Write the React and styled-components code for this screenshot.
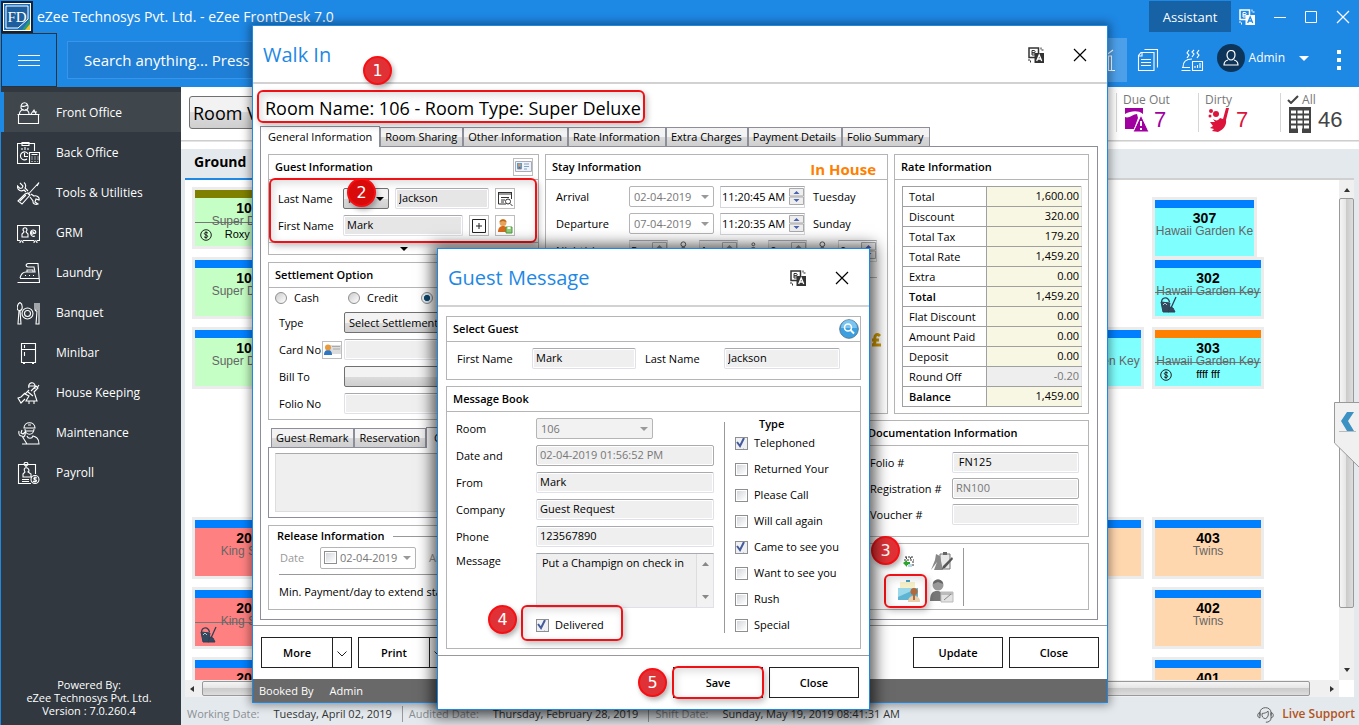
import styled, {createGlobalStyle, css} from "styled-components"

const arrow = color =>
  `url("data:image/svg+xml,%3Csvg xmlns='http://www.w3.org/2000/svg' width='8' height='4'%3E%3Cpath d='M0 0h8L4 4z' fill='%23${color}'/%3E%3C/svg%3E")`

const GlobalStyle = createGlobalStyle`
  * {
    box-sizing: border-box;
  }
  body {
    margin: 0;
    overflow: hidden;
    font: 11px/16px "Open Sans", "Noto Sans", sans-serif;
    color: #000;
  }
  button, input, select, textarea {
    margin: 0;
    font: inherit;
    color: inherit;
  }
`

/* shell */

const Shell = styled.div`
  position: relative;
  display: flex;
  flex-direction: column;
  height: 100vh;
  border-left: 1px solid #1e88e5;
  background: #fff;
`

const TitleBar = styled.header`
  display: flex;
  align-items: center;
  height: 33px;
  color: #fff;
  background: #1e88e5;
`

const AppTitle = styled.h1`
  flex: 1;
  margin: 0;
  padding-left: 4px;
  font-size: 14px;
  font-weight: 400;
`

const Assistant = styled.button`
  width: 82px;
  height: 31px;
  border: 0;
  font-size: 13px;
  background: #1762a5;
`

const WindowControls = styled.div`
  display: flex;
  justify-content: space-between;
  align-items: center;
  width: 128px;
  padding: 0 9px 0 8px;
`

const PlainButton = styled.button`
  display: flex;
  padding: 0;
  border: 0;
  background: none;
`

const Toolbar = styled.div`
  display: flex;
  align-items: center;
  height: 54px;
  color: #fff;
  background: #1e88e5;
`

const MenuButton = styled.button`
  display: flex;
  flex-direction: column;
  justify-content: center;
  align-items: center;
  gap: 4px;
  align-self: stretch;
  width: 56px;
  border: 1px solid #29333d;
  background: none;

  span {
    width: 22px;
    height: 1px;
    background: #fff;
  }
`

const Search = styled.input`
  width: 460px;
  height: 38px;
  margin: 0 auto 0 10px;
  padding: 0 16px;
  border: 1px solid #3a94e8;
  font-size: 15px;
  background: #1f7ed5;

  &::placeholder {
    color: #fff;
    opacity: 1;
  }
`

const ToolButton = styled(PlainButton)`
  justify-content: center;
  align-items: center;
  width: 44px;
  height: 44px;
  background: ${props => props.$active ? "#4ca0ea" : "none"};
`

const UserMenu = styled(PlainButton)`
  align-items: center;
  gap: 4px;
  padding: 0 0 4px 2px;
  font-size: 12px;
`

const Avatar = styled.span`
  display: flex;
  justify-content: center;
  align-items: center;
  width: 28px;
  height: 28px;
  border-radius: 50%;
  background: #0d3459;
`

const Caret = styled.span`
  margin-left: 10px;
  border: 5px solid transparent;
  border-top-color: #fff;
  border-bottom: 0;
`

const Dots = styled(PlainButton)`
  flex-direction: column;
  gap: 4px;
  padding: 0 18px 0 28px;

  span {
    width: 4px;
    height: 4px;
    background: #fff;
  }
`

const Body = styled.div`
  display: flex;
  flex: 1;
  min-height: 0;
`

const Sidebar = styled.nav`
  display: flex;
  flex-direction: column;
  width: 180px;
  padding-top: 5px;
  color: #fff;
  background: #31383f;
`

const NavItem = styled.a`
  display: flex;
  align-items: center;
  gap: 16px;
  height: 40px;
  padding: 2px 0 0 13px;
  border-left: 3px solid ${props => props.$active ? "#1e88e5" : "transparent"};
  font-size: 12px;
  color: #fff;
  text-decoration: none;
  background: ${props => props.$active ? "#3f464c" : "none"};
`

const PoweredBy = styled.p`
  margin: auto 4px 8px 0;
  font-size: 11px;
  line-height: 13px;
  text-align: center;
`

const Main = styled.main`
  display: flex;
  flex: 1;
  flex-direction: column;
  min-width: 0;
  background: #e4e9ed;
`

const StatusRow = styled.div`
  display: flex;
  justify-content: space-between;
  height: 62px;
  padding: 6px 0 0 8px;
  border-bottom: 7px solid #fff;
  background: linear-gradient(#fff 53px, #c4c4c4 53px, #eee 55px);
`

const RoomView = styled.button`
  width: 140px;
  height: 33px;
  margin-top: 3px;
  padding: 0 3px;
  border: 1px solid #707070;
  border-radius: 3px;
  font-size: 18px;
  text-align: left;
  background: linear-gradient(#f2f2f2 50%, #dcdcdc 50%, #cfcfcf);
`

const Counters = styled.div`
  display: flex;
  height: 39px;
`

const Counter = styled.div`
  width: 82px;
  padding-left: 6px;
  border-left: 1px solid #d6d6d6;
  font-size: 12px;
  line-height: 14px;
  color: #777;

  &:last-child {
    width: 79px;
  }

  div {
    display: flex;
    align-items: center;
    gap: 5px;
    font: 22px/24px "Liberation Sans", Arial, sans-serif;
    color: ${props => props.color};
  }
`

const FloorName = styled.h2`
  height: 31px;
  margin: 0 5px 0 4px;
  padding: 3px 9px;
  border-bottom: 2px solid #d0d0d0;
  border-image: linear-gradient(90deg, #1e88e5 50%, #d0d0d0 50%) 1;
  font-size: 14px;
  line-height: 20px;
`

const BoardArea = styled.div`
  display: grid;
  grid-template-columns: 1fr 15px;
  grid-template-rows: 1fr 17px;
  flex: 1;
  min-height: 0;
  margin: 0 5px 0 4px;
  background: #fff;
`

/* the fourth row is the gap between two floors */
const Board = styled.div`
  display: grid;
  grid-template-columns: repeat(9, 106px);
  grid-template-rows: repeat(3, 56px) 106px repeat(3, 56px);
  gap: 14px;
  padding: 10px;
  overflow: hidden;
`

const RoomTile = styled.section`
  grid-column: ${props => props.$col};
  grid-row: ${props => props.$row};
  align-self: start;
  height: 56px;
  border-top: 8px solid ${props => props.$bar || "#0080ff"};
  box-shadow: 0 0 0 3px #ececec;
  font: 12px/13px "Liberation Sans", Arial, sans-serif;
  text-align: center;
  color: #666;
  white-space: nowrap;
  background: ${props => props.$fill};

  ${props => props.$small && css`
    width: 99px;
    margin-top: 10px;
  `}

  strong {
    display: block;
    padding-top: 4px;
    font-size: 14px;
    color: #000;
  }
`

const TileNote = styled.div`
  display: grid;
  grid-template-columns: 18px 1fr 18px;
  align-items: center;
  height: 24px;
  margin-top: -6px;
  padding: 0 5px;
  border-top: 1px solid #777;
  font-size: 11px;
  color: #000;
`

const ScrollTrack = styled.div`
  display: flex;
  flex-direction: ${props => props.$vertical ? "column" : "row"};
  justify-content: space-between;
  align-items: center;
  padding: ${props => props.$vertical ? "8px 0" : "0 5px"};
  background: #f0f0f0;
`

const ScrollThumb = styled.div`
  flex: 1;
  align-self: stretch;
  margin: ${props => props.$vertical ? "6px 0 60px" : "1px 20px 1px 8px"};
  border: 1px solid #999;
  border-radius: 2px;
  background: linear-gradient(${props => props.$vertical ? "90deg" : "180deg"}, #f5f5f5, #e4e4e4 50%, #cbcbcb 50%, #ddd);
`

const Tip = styled.span`
  border: 3px solid transparent;
  ${props => css`
    border-${props.$to}: 0;
    border-${props.$from}: 4px solid #333;
  `}
`

const StatusBar = styled.footer`
  display: flex;
  align-items: center;
  height: 28px;
  padding: 6px 4px 0 6px;
  font-size: 11px;
  white-space: nowrap;
  color: #333;
`

const StatusCell = styled.span`
  display: flex;
  gap: 14px;
  padding-right: 10px;
  margin-right: 6px;
  border-right: 1px solid ${props => props.$last ? "transparent" : "#999"};

  span {
    color: #8b8f94;
  }
`

const Support = styled.a`
  display: flex;
  align-items: center;
  gap: 8px;
  margin-left: auto;
  font-size: 12px;
  font-weight: 600;
  color: #b3541a;
  text-decoration: none;

  svg {
    color: #444;
  }
`

const SideFlap = styled.svg`
  position: absolute;
  right: 0;
  top: 402px;
`

/* windows */

const Window = styled.section`
  position: absolute;
  left: ${props => props.$left}px;
  top: ${props => props.$top}px;
  width: ${props => props.$width}px;
  border: 1px solid #1e88e5;
  background: #fff;
  box-shadow: ${props => props.$front ? "0 2px 14px 5px rgba(0, 0, 0, .65)" : "0 0 9px 2px rgba(0, 0, 0, .4)"};
`

const WindowHead = styled.header`
  display: flex;
  align-items: center;
  gap: 29px;
  height: 58px;
  padding: 2px 20px 0 10px;
  border-bottom: 2px solid #d2d2d2;

  h2 {
    flex: 1;
    margin: 0;
    font-size: 20px;
    font-weight: 400;
    line-height: 28px;
    color: #1e88e5;
  }
`

const WindowFoot = styled.footer`
  display: flex;
  gap: 6px;
  height: 54px;
  padding: 11px ${props => props.$pad}px 0;
  border-top: 1px solid #999;
`

const ActionButton = styled.button`
  width: 90px;
  height: 31px;
  border: 1px solid #222;
  font-weight: 600;
  background: #fff;
`

const SplitButton = styled.div`
  display: flex;

  ${ActionButton} {
    width: 72px;
  }

  ${ActionButton} + ${ActionButton} {
    width: 20px;
    margin-left: -1px;
    padding: 0 4px;
  }
`

const Spacer = styled.span`
  flex: 1;
`

const BookedBy = styled.div`
  display: flex;
  gap: 16px;
  height: 23px;
  padding: 4px 6px;
  color: #fff;
  background: #696969;
`

const RoomHeading = styled.h3`
  height: 42px;
  margin: 0;
  padding: 10px 12px;
  font-size: 18px;
  font-weight: 400;
  line-height: 28px;
`

const Tabs = styled.div`
  display: flex;
  align-items: flex-end;
  height: 20px;
  padding: 0 ${props => props.$pad || 7}px;
`

const Tab = styled.button`
  height: 19px;
  padding: 0 5px 0 4px;
  border: 1px solid #8c8e9a;
  border-bottom: 0;
  white-space: nowrap;
  background: linear-gradient(#f3f3f3 50%, #dadada 50%, #cfcfcf);

  ${props => props.$active && css`
    position: relative;
    height: 21px;
    margin-bottom: -1px;
    padding: 0 7px;
    background: #fff;
  `}
`

const TabPanel = styled.div`
  display: grid;
  grid-template-columns: 271px 1fr;
  gap: 6px;
  margin: 0 9px 5px 7px;
  padding: 7px 8px 9px 7px;
  border: 1px solid #8c8e9a;
`

const Column = styled.div`
  display: flex;
  flex-direction: column;
  gap: ${props => props.$gap}px;
  min-width: 0;
`

const TopPanels = styled.div`
  display: grid;
  grid-template-columns: 1fr 195px;
  gap: 6px;
  height: 260px;
`

const Group = styled.section`
  border: 1px solid #b5b5b5;
  min-width: 0;
  ${props => props.$side && css`
    align-self: flex-end;
    width: 228px;
  `}
`

const GroupHead = styled.h4`
  display: flex;
  justify-content: space-between;
  align-items: center;
  height: 25px;
  margin: 0;
  padding: 0 ${props => props.$tight ? 1 : 5}px 0 6px;
  border-bottom: 1px solid #b5b5b5;
  font-size: 11px;
  font-weight: 600;
`

const InHouse = styled.span`
  padding: 3px 6px 0 0;
  font-size: 15px;
  font-weight: 700;
  color: #ff8000;
`

const Fields = styled.div`
  display: flex;
  flex-direction: column;
  gap: ${props => props.$gap || 6}px;
  padding: ${props => props.$pad};
`

const Row = styled.div`
  display: flex;
  align-items: center;
  gap: ${props => props.$gap || 0}px;
  height: 21px;
`

const RadioRow = styled.div`
  display: flex;
  align-items: center;
  height: 18px;
  padding: 2px 0 0 6px;
  overflow: hidden;
`

const Label = styled.label`
  flex: none;
  width: ${props => props.$width}px;
  white-space: nowrap;
  color: ${props => props.$muted ? "#999" : "#000"};
`

const DayName = styled.span`
  padding-left: 8px;
`

const field = css`
  flex: none;
  width: ${props => props.$width}px;
  height: 21px;
  padding: 0 3px 2px;
  border: 1px solid #e0e1e8;
  border-top-color: #a8aab0;
  border-radius: 2px;
  outline: 0;
`

const Input = styled.input`
  ${field}
  box-shadow: inset 0 0 0 1px #fff;
  color: ${props => props.$muted ? "#777" : "#000"};
  background: ${props => props.$fill || "#efefef"};
  ${props => props.$muted && css`border-color: #ababab;`}
`

const Select = styled.select`
  ${field}
  padding: 0 4px;
  appearance: none;
  border-color: ${props => props.$muted ? "#b5b5b5" : "#707070"};
  color: ${props => props.$muted ? "#777" : "#000"};
  background: ${props => arrow(props.$muted ? "999999" : "000000")} right 4px center no-repeat,
    ${props => props.$flat || "linear-gradient(#f3f3f3 50%, #dcdcdc 50%, #cfcfcf)"};
`

const TimeBox = styled.span`
  display: flex;
  flex: none;
  align-items: center;
  width: ${props => props.$width}px;
  height: 22px;
  margin-left: ${props => props.$after || 0}px;
  border: 1px solid #d5d7dd;
  border-top-color: #a8aab0;
  background: ${props => props.$muted ? "#eee" : "#fff"};

  input {
    flex: 1;
    min-width: 0;
    padding: 0 0 0 1px;
    border: 0;
    background: none;
  }
`

const StayRule = styled.hr`
  width: 100%;
  height: 1px;
  margin: 10px 0 0;
  border: 0;
  background: #b5b5b5;
`

const StayTotal = styled.div`
  display: flex;
  justify-content: flex-end;
  align-items: center;
  height: 124px;
  padding-right: 5px;
`

const IconButton = styled.button`
  display: flex;
  justify-content: center;
  align-items: center;
  flex: none;
  width: 20px;
  height: ${props => props.$low ? 18 : 21}px;
  padding: 0;
  border: 1px solid #bdbdbd;
  background: #fff;
`

const More = styled.button`
  display: flex;
  justify-content: center;
  align-items: center;
  width: 100%;
  height: 12px;
  margin-top: 6px;
  padding: 0;
  border: 0;
  border-top: 1px solid #b5b5b5;
  background: none;
`

const Choice = styled.label`
  display: flex;
  flex: none;
  align-items: center;
  gap: ${props => props.$gap || 6}px;
  width: ${props => props.$width || 110}px;
  height: 14px;
  white-space: nowrap;
`

const Radio = styled.input`
  appearance: none;
  flex: none;
  width: 12px;
  height: 12px;
  border: 1px solid #8e8f8f;
  border-radius: 50%;
  background: linear-gradient(135deg, #ccc, #fff);

  &:checked {
    background: radial-gradient(#0d4a73 40%, #e6f2fa 46%);
  }
`

const Check = styled.input`
  appearance: none;
  flex: none;
  width: 13px;
  height: 13px;
  padding: 1px;
  border: 1px solid #8e8f8f;
  background: linear-gradient(135deg, #d4d7dc, #fff) content-box;

  &:checked {
    background: url("data:image/svg+xml,%3Csvg xmlns='http://www.w3.org/2000/svg' width='11' height='11'%3E%3Cpath d='M2 5l3 4 4-8' fill='none' stroke='%23435a9b' stroke-width='2'/%3E%3C/svg%3E") border-box, #eef0f4;
  }
`

const RemarkPanel = styled.div`
  height: 71px;
  padding: 5px 6px;
  border: 1px solid #8c8e9a;

  textarea {
    width: 100%;
    height: 59px;
    border: 1px solid #ddd;
    border-top-color: #aaa;
    resize: none;
    background: #efefef;
  }
`

const Release = styled(Group)`
  height: 85px;
  padding: 2px 8px;

  h4 {
    display: flex;
    align-items: center;
    gap: 9px;
    margin: 0 0 3px;
    font-size: 11px;
    font-weight: 600;
  }

  h4::after {
    content: "";
    flex: 1;
    border-top: 1px solid #999;
  }

  p {
    margin: 6px 2px;
    padding-top: 9px;
    border-top: 1px solid #999;
    white-space: nowrap;
    overflow: hidden;
  }
`

const DateBox = styled.span`
  display: flex;
  flex: none;
  align-items: center;
  gap: 3px;
  width: 96px;
  height: 22px;
  padding: 0 4px 0 3px;
  border: 1px solid #b5b5b5;
  border-radius: 2px;
  white-space: nowrap;
  color: #777;
  background: ${arrow("999999")} right 4px center no-repeat;
`

const RateTable = styled.table`
  margin: 6px 0 0 7px;
  border-collapse: collapse;

  th, td {
    height: 20px;
    padding: 0 6px;
    border: 1px solid #a0a0a0;
    line-height: 16px;
    white-space: nowrap;
  }

  th {
    width: 84px;
    font-weight: 400;
    text-align: left;
  }

  td {
    width: 95px;
    padding: 0 2px 2px;
    border-right-color: #e2e3ea;
    text-align: right;
    background: #f8f7e4;
  }
`

const RateRow = styled.tr`
  th {
    font-weight: ${props => props.$strong ? 600 : 400};
  }
  ${props => props.$muted && css`
    td {
      color: #777;
      background: #eee;
    }
  `}
`

const IconPanel = styled(Group)`
  display: flex;
  justify-content: flex-start;
  height: 67px;
  padding: 4px 0 3px 34px;
`

const IconGrid = styled.div`
  display: grid;
  grid-template-columns: 26px 26px;
  grid-template-rows: 28px 28px;
  gap: 1px 7px;
  place-items: center;
  padding-right: 8px;
  border-right: 1px solid #999;
`

const MessageArea = styled.div`
  padding: 9px 8px 6px;

  ${Group} + ${Group} {
    margin-top: 6px;
  }
`

const MessageBook = styled.div`
  display: flex;
  height: 236px;
  padding: 6px 0 0 9px;
`

const MessageRow = styled.div`
  display: flex;
  align-items: flex-start;
`

const Delivered = styled(Choice)`
  margin: 4px 0 0 80px;
`

const TypeColumn = styled.fieldset`
  display: flex;
  flex-direction: column;
  gap: 12px;
  height: 211px;
  margin: 4px 0 0 10px;
  padding: 14px 0 0 10px;
  border: 0;
  border-left: 1px solid #999;
  min-width: 0;
`

const TypeTitle = styled.b`
  margin: -20px 0 -8px 24px;
  font-weight: 600;
`

const TextAreaBox = styled.div`
  display: flex;
  width: 178px;
  height: 55px;
  border: 1px solid #e0e1e8;
  border-top-color: #a8aab0;
  background: #efefef;

  textarea {
    flex: 1;
    min-width: 0;
    padding: 1px 0 0 5px;
    border: 0;
    white-space: nowrap;
    overflow: hidden;
    resize: none;
    background: none;
  }

  > span {
    display: flex;
    flex-direction: column;
    justify-content: space-between;
    align-items: center;
    width: 17px;
    padding: 8px 0;
    border-left: 1px solid #ddd;
    background: #f2f2f2;
  }
`

/* numbered steps drawn over the windows */

const Marker = styled.span`
  position: absolute;
  left: ${props => props.$x}px;
  top: ${props => props.$y}px;
  width: 29px;
  height: 29px;
  border: 2px solid #f80f14;
  border-radius: 50%;
  font: 16px/25px "DejaVu Sans", sans-serif;
  text-align: center;
  color: #fff;
  background: ${props => props.$solid ? "#d90a0a" : "#e03236"};
  box-shadow: 2px 3px 5px rgba(0, 0, 0, .3);
`

const Outline = styled.span`
  position: absolute;
  left: ${props => props.$x}px;
  top: ${props => props.$y}px;
  width: ${props => props.$w}px;
  height: ${props => props.$h}px;
  border: 2px solid #f01116;
  border-radius: 6px;
  box-shadow: 2px 3px 6px rgba(0, 0, 0, .25), inset 2px 3px 8px rgba(0, 0, 0, .14);
  pointer-events: none;
`

const LineIcon = ({children, size = 23}) => (
  <svg width={size} height={size} viewBox="0 0 23 23" fill="none" stroke="currentColor" strokeWidth="1.1">
    {children}
  </svg>
)

const Translate = ({color = "#333", paper = "#fff"}) => (
  <svg width="16" height="16" viewBox="0 0 16 16">
    <path d="M1 1h9.500v9.500H1z" fill={paper} stroke={color} strokeWidth="1.5"/>
    <path d="M4 3.500v4.500h2c2 0 2-2.200.5-2.200H4h2.200c1.300 0 1.300-2.300 0-2.300z" fill="none" stroke={color}/>
    <path d="M6.500 6H16v10H6.500z" fill={color}/>
    <path d="M8.700 14l2.500-6 2.500 6M9.700 12h3" fill="none" stroke={paper} strokeWidth="1.300"/>
    <path d="M13 .5v2.500h3M0 13h2.500v3" fill="none" stroke={color} strokeDasharray="2 1"/>
  </svg>
)

const Cross = ({color = "#000"}) => (
  <svg width="14" height="14" viewBox="0 0 14 14" stroke={color} strokeWidth="1.2">
    <path d="M1 1l12 12M13 1L1 13"/>
  </svg>
)

const Spin = ({muted}) => (
  <svg width="15" height="17" viewBox="0 0 15 17">
    <path d="M.5.5h14v7.500H.5zM.5 9h14v7.500H.5z" fill="#eee" stroke="#aaa"/>
    <path d="M4.500 6L7.500 3l3 3zM4.500 11l3 3 3-3z" fill={muted ? "#888" : "#4a62b0"}/>
  </svg>
)

const Occupant = ({child}) => (
  <svg width="32" height="21" viewBox="0 0 32 21" fill="none" stroke="#555">
    <circle cx="16" cy="4" r={child ? 1.5 : 2.500}/>
    <path d="M12 14c0-9 8-9 8 0zM14 14v6M18 14v6"/>
  </svg>
)

const Person = () => (
  <svg width="16" height="16" viewBox="0 0 16 16">
    <path d="M1 14c0-4 2-6 5-6s5 2 5 6z" fill="#d8691b"/>
    <circle cx="6" cy="4.500" r="3.500" fill="#e8a35a"/>
    <path d="M2.500 4C3 .5 9 .5 9.500 4L6 3z" fill="#b5651d"/>
    <path d="M9 9h6v6H9z" fill="#8fce7a" stroke="#4f9b3c"/>
    <path d="M10.500 9h3v2h-3z" fill="#fff"/>
  </svg>
)

const CardIcon = () => (
  <svg width="17" height="12" viewBox="0 0 17 12">
    <path d="M.5.5h16v10H.5z" fill="#eef3f8" stroke="#aab"/>
    <path d="M2 2h5v6H2z" fill="#5b9bd5"/>
    <circle cx="4.500" cy="4" r="1.500" fill="#d39a63"/>
    <path d="M2.500 8c0-3 4-3 4 0zM9 3h5M9 5.500h5M9 8h3" fill="#8a4b20" stroke="#7fa3c7"/>
  </svg>
)

const CardPerson = () => (
  <svg width="17" height="12" viewBox="0 0 17 12">
    <path d="M5 1h12v9H5z" fill="#ddd"/>
    <path d="M8 2.500h8M9 5h7" stroke="#aaa"/>
    <path d="M0 11c0-4 2-5 4-5s4 1 4 5z" fill="#2c76c4"/>
    <circle cx="4" cy="3.500" r="3" fill="#e79b3c"/>
  </svg>
)

const Bucket = () => (
  <svg width="17" height="17" viewBox="0 0 17 17" stroke="#2f3f55">
    <path d="M1 6l9 1-1.500 9H3z" fill="#34495e"/>
    <path d="M1.500 6C2 1 8 0 9.500 6M16 1l-5 11" fill="none" strokeWidth="1.300"/>
    <path d="M10 11l3 1 2 4H8z" fill="#34495e"/>
    <path d="M3 9l2-2 2 2" stroke="#a9c7d0" fill="none"/>
  </svg>
)

const Coin = () => (
  <svg width="12" height="12" viewBox="0 0 12 12" fill="none" stroke="#222">
    <circle cx="6" cy="6" r="5.300"/>
    <path d="M8 4.200C7 3 4.200 3.200 4.300 4.700 4.400 6.300 7.700 5.500 7.700 7.300 7.700 8.900 5 9 4 7.700M6 2.200v7.600"/>
  </svg>
)

const navItems = [
  ["Front Office", <path d="M.5 12.500h22M1.500 12.500v9h20v-9M2.500 12c0-3 2-4 4-4.500M12 12c0-3-2-4-4-4.500M4 6c-1-7 8-7 7 0-1 3-6 3-7 0zM4 4c2 1 5 0 6-1M14 12l3-4 2 4M16 10h4"/>],
  ["Back Office", <path d="M12 21.500H.5v-20h17V9M5 3.500V.5h7v3zM5 8V6M8 8V5M11 8V6M11 12a4 4 0 1 0-1 5M7.500 11v3.500H11M12.500 10.500h10v11h-10zM14.500 12.500h6M14.500 15h1m2 0h1m2 0h1M14.500 17h1m2 0h1m2 0h1M14.500 19.500h1m2 0h1m2 0h1"/>],
  ["Tools & Utilities", <path d="M22 .5l-11 12M20 4l2-3.500M11 11l2 2-8 9-4-3 7-7zM3 19l6-6M3 1l3 3-1 2-2 .5L.500 4C0 8 4 10 7 8l2 2M7 .5C9 2 9 5 8 6l3 3M13 15l3 4c-.5 3 3 4 5 3l-3-2 1-3 3 1c1-3-3-5-5-4l-3-2"/>],
  ["GRM", <path d="M3 18.500H.5v-15h22v15H20M6 18.500h11M3 21c0-3 3-3 3 0M17 21c0-3 3-3 3 0M5 15v-3l2-2-1-2c0-3 4-3 4 0l-1 2 2 2v3zM18 14c-5 2-6-6-2-6 4 0 3 5 1 3-1-2-3-1-3 0 1 2 3 1 3-1"/>],
  ["Laundry", <path d="M.5 20.500h22L21 1.500H11C8 2 9 5 11 5h6l1 5H9c-3 0-5 2-6 6M3 16.500h19M10 10V8h6v2M8 13.500h1m3 0h1m3 0h1"/>],
  ["Banquet", <path d="M3 .5C0 2-1 8 2 8.500L1 22h3L3 8.500C6 8 6 2 3 .5zM18 1v6c0 1 1 2 2 2l-1 13h3V1M20 1v7M16 11.500a5.500 5.500 0 1 0-11 0 5.500 5.500 0 0 0 11 0zM13.500 11.500a3 3 0 1 0-6 0 3 3 0 0 0 6 0z"/>],
  ["Minibar", <path d="M4.500 1.500h14v19h-14zM4.500 7.500h14M7.500 3v3M7.500 10v4M6 21.500h2M15 21.500h2"/>],
  ["House Keeping", <path d="M12 6c-2-6 6-7 6-2v3M12 4h6M12 8l-4 4 4 2-3 5h11l-3-9 4-4-2-2-5 5M8 11L4 15 1 16l3 5 4-4M20 6l2-3M12 19v3M17 19v3M11 10l5 4"/>],
  ["Maintenance", <path d="M7 6c0-7 11-7 11 0zM8 7c0 7 9 7 9 0M8 9h9M5 22h17c0-6-3-7-6-8-1 3-5 3-6 0M2 9c-1 4 1 5 3 5l5 8M5 8l-1 3 2 1 2-2c1 3-1 5-2 5M11 3h3"/>],
  ["Payroll", <path d="M14 21.500H1.500v-19h17V12M7 2.500c0-3 4-3 4 0l-2 2zM6 15v-3l2-2c-3-5 4-6 4-1l-1 1 3 2v3zM5 17.500h7M5 19.500h7M22 17.500a4 4 0 1 0-8 0 4 4 0 0 0 8 0zM20 16c-4-2-4 2-1 2 2 2-2 2-3 1M18 14.500v6"/>],
]

const tiles = [
  {no: "101", name: "Super Deluxe", col: 1, row: 1, fill: "#c5ffc5", bar: "#808000", guest: "Roxy Gar"},
  {no: "102", name: "Super Deluxe", col: 1, row: 2, fill: "#c5ffc5"},
  {no: "103", name: "Super Deluxe", col: 1, row: 3, fill: "#c5ffc5"},
  {no: "307", name: "Hawaii Garden Ke", col: 9, row: 1, fill: "#80ffff", small: true},
  {no: "302", name: "Hawaii Garden Key", col: 9, row: 2, fill: "#80ffff", dirty: true},
  {no: "306", name: "Hawaii Garden Key", col: 8, row: 3, fill: "#80ffff"},
  {no: "303", name: "Hawaii Garden Key", col: 9, row: 3, fill: "#80ffff", bar: "#ff8000", guest: "ffff fff"},
  {no: "201", name: "King Suite", col: 1, row: 5, fill: "#ff8080"},
  {no: "202", name: "King Suite", col: 1, row: 6, fill: "#ff8080", dirty: true},
  {no: "203", name: "", col: 1, row: 7, fill: "#ff8080"},
  {no: "404", name: "Twins", col: 8, row: 5, fill: "#ffd7ae"},
  {no: "403", name: "Twins", col: 9, row: 5, fill: "#ffd7ae"},
  {no: "402", name: "Twins", col: 9, row: 6, fill: "#ffd7ae"},
  {no: "401", name: "", col: 9, row: 7, fill: "#ffd7ae"},
]

const rates = [
  ["Total", "1,600.00"],
  ["Discount", "320.00"],
  ["Total Tax", "179.20"],
  ["Total Rate", "1,459.20"],
  ["Extra", "0.00"],
  ["Total", "1,459.20", "strong"],
  ["Flat Discount", "0.00"],
  ["Amount Paid", "0.00"],
  ["Deposit", "0.00"],
  ["Round Off", "-0.20", "muted"],
  ["Balance", "1,459.00", "strong"],
]

const messageTypes = [
  ["Telephoned", true],
  ["Returned Your"],
  ["Please Call"],
  ["Will call again"],
  ["Came to see you", true],
  ["Want to see you"],
  ["Rush"],
  ["Special"],
]

const Head = ({title}) => (
  <WindowHead>
    <h2>{title}</h2>
    <PlainButton aria-label="Language"><Translate/></PlainButton>
    <PlainButton aria-label="Close window"><Cross/></PlainButton>
  </WindowHead>
)

const Split = ({children}) => (
  <SplitButton>
    <ActionButton>{children}</ActionButton>
    <ActionButton aria-label={`${children} options`}>
      <svg width="10" height="6" viewBox="0 0 10 6" fill="none" stroke="#222"><path d="M.5.5L5 5 9.500.5"/></svg>
    </ActionButton>
  </SplitButton>
)

const StayRow = ({label, date, time, day}) => (
  <Row>
    <Label $width={73} htmlFor={label}>{label}</Label>
    <Select id={label} $width={85} $muted $flat="#fff"><option>{date}</option></Select>
    <TimeBox $width={85} $after={6}><input aria-label={`${label} time`} defaultValue={time}/><Spin/></TimeBox>
    <DayName>{day}</DayName>
  </Row>
)

const WalkIn = () => (
  <Window $left={251} $top={25} $width={856}>
    <Head title="Walk In"/>
    <RoomHeading>Room Name: 106 - Room Type: Super Deluxe</RoomHeading>
    <Tabs>
      <Tab $active>General Information</Tab>
      <Tab>Room Sharing</Tab>
      <Tab>Other Information</Tab>
      <Tab>Rate Information</Tab>
      <Tab>Extra Charges</Tab>
      <Tab>Payment Details</Tab>
      <Tab>Folio Summary</Tab>
    </Tabs>
    <TabPanel>
      <Column $gap={7}>
        <Group>
          <GroupHead>
            Guest Information
            <IconButton $low aria-label="Guest card"><CardIcon/></IconButton>
          </GroupHead>
          <Fields $pad="8px 0 0 9px">
            <Row $gap={6}>
              <Label $width={59} htmlFor="last">Last Name</Label>
              <Select aria-label="Salutation" $width={46}><option>Mr.</option></Select>
              <Input id="last" $width={94} $fill="#e6e6e6" defaultValue="Jackson"/>
              <IconButton aria-label="Find guest">
                <svg width="16" height="16" viewBox="0 0 16 16" fill="none" stroke="#333">
                  <path d="M1 3h14M1 1.500h14M1.500 1v12H9M14.500 1v7M4 6.500h8M4 9h4M4 11h3"/>
                  <circle cx="11" cy="10.500" r="2.500"/><path d="M13 12.500l2.500 2.500"/>
                </svg>
              </IconButton>
            </Row>
            <Row $gap={6}>
              <Label $width={59} htmlFor="first">First Name</Label>
              <Input id="first" $width={120} $fill="#e6e6e6" defaultValue="Mark"/>
              <IconButton aria-label="Add guest">
                <svg width="14" height="14" viewBox="0 0 14 14" fill="none" stroke="#222">
                  <path d="M.5.5h13v13H.5zM7 4v6M4 7h6"/>
                </svg>
              </IconButton>
              <IconButton aria-label="Guest profile"><Person/></IconButton>
            </Row>
          </Fields>
          <More aria-label="More fields"><svg width="8" height="4"><path d="M0 0h8L4 4z"/></svg></More>
        </Group>

        <Group>
          <GroupHead>Settlement Option</GroupHead>
          <RadioRow>
            <Choice $width={73} $gap={7}><Radio type="radio" name="pay"/>Cash</Choice>
            <Choice $width={73} $gap={7}><Radio type="radio" name="pay"/>Credit</Choice>
            <Choice $width={73} $gap={7}><Radio type="radio" name="pay" aria-label="City Ledger" defaultChecked/></Choice>
          </RadioRow>
          <Fields $pad="6px 0 5px 10px">
            <Row>
              <Label $width={65} htmlFor="type">Type</Label>
              <Select id="type" $width={180}><option>Select Settlement</option></Select>
            </Row>
            <Row>
              <Label $width={43} htmlFor="card">Card No</Label>
              <IconButton $low aria-label="Read card"><CardPerson/></IconButton>
              <Spacer/>
              <Input id="card" $width={194}/>
            </Row>
            <Row>
              <Label $width={65} htmlFor="bill">Bill To</Label>
              <Select id="bill" $width={180}><option> </option></Select>
            </Row>
            <Row>
              <Label $width={65} htmlFor="folioNo">Folio No</Label>
              <Input id="folioNo" $width={180}/>
            </Row>
          </Fields>
        </Group>

        <div>
          <Tabs $pad={3}>
            <Tab>Guest Remark</Tab>
            <Tab>Reservation</Tab>
            <Tab $active>Check In</Tab>
          </Tabs>
          <RemarkPanel><textarea aria-label="Remark"/></RemarkPanel>
        </div>

        <Release>
          <h4>Release Information</h4>
          <Fields $pad="0 0 0 3px">
            <Row $gap={13}>
              <Label $width={27} $muted htmlFor="release">Date</Label>
              <DateBox><Check type="checkbox" id="release"/>02-04-2019</DateBox>
              <Label as="span" $width={60} $muted>Amount</Label>
            </Row>
          </Fields>
          <p>Min. Payment/day to extend stay</p>
        </Release>
      </Column>

      <Column $gap={6}>
        <TopPanels>
          <Group>
            <GroupHead>Stay Information<InHouse>In House</InHouse></GroupHead>
            <Fields $pad="6px 10px 0 10px">
              <StayRow label="Arrival" date="02-04-2019" time="11:20:45 AM" day="Tuesday"/>
              <StayRow label="Departure" date="07-04-2019" time="11:20:35 AM" day="Sunday"/>
              <Row>
                <Label $width={73} htmlFor="nights">Night(s)</Label>
                <TimeBox $width={39} $muted><input id="nights" defaultValue="5"/><Spin muted/></TimeBox>
                <Occupant/>
                <TimeBox $width={39} $muted><input aria-label="Adults" defaultValue="1"/><Spin muted/></TimeBox>
                <Occupant child/>
                <TimeBox $width={39} $muted><input aria-label="Children" defaultValue="0"/><Spin muted/></TimeBox>
                <Occupant/>
                <TimeBox $width={39}><input aria-label="Infants" defaultValue="0"/><Spin/></TimeBox>
              </Row>
              <StayRule/>
            </Fields>
            <StayTotal>
              <svg width="18" height="14" viewBox="0 0 18 14" fill="none" stroke="#d19a00" strokeWidth="3">
                <path d="M16 3c-3-3-6-1-5 4 0 3-1 5-3 5h9M8 7h7"/>
              </svg>
            </StayTotal>
          </Group>
          <Group>
            <GroupHead>Rate Information</GroupHead>
            <RateTable>
              <tbody>
                {rates.map(([name, value, kind], i) => (
                  <RateRow key={i} $strong={kind === "strong"} $muted={kind === "muted"}>
                    <th scope="row">{name}</th>
                    <td>{value}</td>
                  </RateRow>
                ))}
              </tbody>
            </RateTable>
          </Group>
        </TopPanels>

        <Group $side>
          <GroupHead>Documentation Information</GroupHead>
          <Fields $pad="6px 0 11px 8px" $gap={5}>
            <Row>
              <Label $width={82} htmlFor="folio">Folio #</Label>
              <Input id="folio" $width={127} defaultValue=" FN125"/>
            </Row>
            <Row>
              <Label $width={82} htmlFor="reg">Registration #</Label>
              <Input id="reg" $width={127} $muted defaultValue="RN100"/>
            </Row>
            <Row>
              <Label $width={82} htmlFor="voucher">Voucher #</Label>
              <Input id="voucher" $width={127}/>
            </Row>
          </Fields>
        </Group>

        <IconPanel $side>
          <IconGrid>
            <PlainButton aria-label="Transfer">
              <svg width="14" height="14" viewBox="0 0 14 14" fill="none">
                <path d="M3 2h9M2 5h10M4 2l1 3M9 2l-1 3M10 7h3M10 10h3" stroke="#333" strokeDasharray="2 1"/>
                <path d="M1 8l4-3v2h3v3H5v2z" fill="#2ca52c"/>
                <path d="M6 9h4v3H6z" fill="#bcd8e6"/>
              </svg>
            </PlainButton>
            <PlainButton aria-label="Task">
              <svg width="22" height="20" viewBox="0 0 22 20">
                <path d="M9 2h10v15H9z" fill="#e8e8e8" stroke="#777"/>
                <path d="M12 0h4v3h-4z" fill="#666"/>
                <path d="M5 2l4 2 1 5 2 9H3l3-8-6 8 4-10z" fill="#888"/>
                <path d="M21 5l-9 9-1 3 3-1 8-9z" fill="#555"/>
              </svg>
            </PlainButton>
            <PlainButton aria-label="Guest message">
              <svg width="24" height="22" viewBox="0 0 24 22">
                <path d="M3 2h15v8H3z" fill="#f5f0c8"/>
                <path d="M9 0h4v2H9z" fill="#4aa0c0"/>
                <path d="M1 8h20v12H1z" fill="#5db4d3"/>
                <path d="M1 8h20L1 17z" fill="#9ad8ea"/>
                <path d="M11 22c0-5 3-6 6-6s6 1 6 6z" fill="#e9d0ae"/>
                <circle cx="17" cy="11.500" r="3.500" fill="#b4693a"/>
                <path d="M16 13h2v7h-2z" fill="#b4693a"/>
              </svg>
            </PlainButton>
            <PlainButton aria-label="Guest preferences">
              <svg width="24" height="24" viewBox="0 0 24 24">
                <path d="M0 22c0-8 3-10 7-10s7 2 7 10z" fill="#777"/>
                <circle cx="8" cy="6" r="5.500" fill="#999"/>
                <path d="M3 5c0-6 10-6 10 0L8 3z" fill="#666"/>
                <path d="M11 13h12v10H11z" fill="#e2e2e2" stroke="#bbb"/>
                <path d="M11 13h12v3H11z" fill="#bbb"/>
                <path d="M14 21l7-6" stroke="#888"/>
              </svg>
            </PlainButton>
          </IconGrid>
        </IconPanel>
      </Column>
    </TabPanel>
    <WindowFoot $pad={8}>
      <Split>More</Split>
      <Split>Print</Split>
      <Spacer/>
      <ActionButton>Update</ActionButton>
      <ActionButton>Close</ActionButton>
    </WindowFoot>
    <BookedBy><span>Booked By</span><span>Admin</span></BookedBy>

    <Outline $x={4} $y={64} $w={388} $h={33}/>
    <Marker $x={110} $y={30}>1</Marker>
    <Outline $x={16} $y={152} $w={268} $h={65}/>
    <Marker $solid $x={94} $y={152}>2</Marker>
    <Outline $x={631} $y={548} $w={43} $h={34}/>
    <Marker $x={618} $y={510}>3</Marker>
  </Window>
)

const TextRow = ({label, value, muted}) => (
  <Row>
    <Label $width={80} htmlFor={`msg${label}`}>{label}</Label>
    <Input id={`msg${label}`} $width={178} $muted={muted} defaultValue={value}/>
  </Row>
)

const GuestMessage = () => (
  <Window $front $left={436} $top={248} $width={433}>
    <Head title="Guest Message"/>
    <MessageArea>
      <Group>
        <GroupHead $tight>
          Select Guest
          <PlainButton aria-label="Search guest">
            <svg width="20" height="20" viewBox="0 0 20 20">
              <circle cx="10" cy="10" r="9.300" fill="#3c9fe0" stroke="#5a7c96"/>
              <path d="M2 9a8 8 0 0 1 16 0z" fill="#79c4f0"/>
              <circle cx="9" cy="8.500" r="3.500" fill="none" stroke="#fff" strokeWidth="1.600"/>
              <path d="M11.500 11l3.500 3.500" stroke="#fff" strokeWidth="2"/>
            </svg>
          </PlainButton>
        </GroupHead>
        <Fields $pad="6px 0 10px 10px">
          <Row>
            <Label $width={75} htmlFor="guestFirst">First Name</Label>
            <Input id="guestFirst" $width={104} defaultValue="Mark"/>
            <LastName $width={88} htmlFor="guestLast">Last Name</LastName>
            <Input id="guestLast" $width={116} defaultValue="Jackson"/>
          </Row>
        </Fields>
      </Group>
      <Group>
        <GroupHead>Message Book</GroupHead>
        <MessageBook>
          <Fields>
            <Row>
              <Label $width={80} htmlFor="room">Room</Label>
              <Select id="room" $width={117} $muted $flat="#f2f2f2"><option>106</option></Select>
            </Row>
            <TextRow label="Date and" value="02-04-2019 01:56:52 PM" muted/>
            <TextRow label="From" value="Mark"/>
            <TextRow label="Company" value="Guest Request"/>
            <TextRow label="Phone" value="123567890"/>
            <MessageRow>
              <Label $width={80} htmlFor="message">Message</Label>
              <TextAreaBox>
                <textarea id="message" defaultValue="Put a Champign on check in"/>
                <span>
                  <svg width="7" height="4"><path d="M0 4h7L3.500 0z" fill="#888"/></svg>
                  <svg width="7" height="4"><path d="M0 0h7L3.500 4z" fill="#888"/></svg>
                </span>
              </TextAreaBox>
            </MessageRow>
            <Delivered><Check type="checkbox" defaultChecked/>Delivered</Delivered>
          </Fields>
          <TypeColumn>
            <TypeTitle>Type</TypeTitle>
            {messageTypes.map(([name, on]) => (
              <Choice key={name}><Check type="checkbox" defaultChecked={on}/>{name}</Choice>
            ))}
          </TypeColumn>
        </MessageBook>
      </Group>
    </MessageArea>
    <WindowFoot $pad={10}>
      <Spacer/>
      <ActionButton>Save</ActionButton>
      <ActionButton>Close</ActionButton>
    </WindowFoot>

    <Outline $x={83} $y={356} $w={102} $h={36}/>
    <Marker $x={50} $y={356}>4</Marker>
    <Outline $x={234} $y={417} $w={92} $h={33}/>
    <Marker $x={200} $y={419}>5</Marker>
  </Window>
)

const LastName = styled(Label)`
  padding-left: 9px;
`

const App = () => (
  <Shell>
    <GlobalStyle/>
    <TitleBar>
      <svg width="32" height="32" viewBox="0 0 32 32">
        <rect x="1" y="1" width="30" height="30" fill="#1f6fb5" stroke="#0e2238" strokeWidth="2"/>
        <rect x="2.500" y="2.500" width="27" height="27" fill="none" stroke="#fff"/>
        <path d="M5 5h22v13L17 27H5z" fill="#1d5f9e" stroke="#fff"/>
        <path d="M29 18v11h-8z" fill="#2a9c74"/>
        <path d="M29 23v6h-5z" fill="#f2c230"/>
        <text x="16" y="21" fontSize="15" textAnchor="middle" fill="#fff" fontFamily="Liberation Serif, serif">FD</text>
      </svg>
      <AppTitle>eZee Technosys Pvt. Ltd. - eZee FrontDesk 7.0</AppTitle>
      <Assistant>Assistant</Assistant>
      <WindowControls>
        <PlainButton aria-label="Language"><Translate color="#fff" paper="#1e88e5"/></PlainButton>
        <PlainButton aria-label="Minimize"><svg width="12" height="12" stroke="#fff"><path d="M0 6.500h12"/></svg></PlainButton>
        <PlainButton aria-label="Maximize"><svg width="12" height="12" stroke="#fff" fill="none"><path d="M.5.5h11v11H.5z"/></svg></PlainButton>
        <PlainButton aria-label="Exit"><Cross color="#fff"/></PlainButton>
      </WindowControls>
    </TitleBar>
    <Toolbar>
      <MenuButton aria-label="Menu"><span/><span/><span/></MenuButton>
      <Search aria-label="Search" placeholder="Search anything... Press"/>
      <ToolButton $active aria-label="Charts">
        <LineIcon><path d="M1 21.500h21M3 21v-6h3v6M9 21V12h3v9M15.500 21V7h3v14M12 7l8-6"/></LineIcon>
      </ToolButton>
      <ToolButton aria-label="Reports">
        <LineIcon><path d="M7.500.500h13v18M4 3.500h13v18H1.500v-15zM1.500 7H5V3.500M4 10.500h10M4 13.500h10M4 16.500h10"/></LineIcon>
      </ToolButton>
      <ToolButton aria-label="Restaurant">
        <LineIcon><path d="M.5 21.500h9M2 18c0-5 3-8 9-8M1 18.500h8M11.500 12.500h10v9h-10zM14 19v-2M16.500 19v-3M19 19v-5M6 9l2-3-2-2 2-3M11 8l2-3-2-2 2-2M16 9l2-3-2-2 2-3"/></LineIcon>
      </ToolButton>
      <UserMenu>
        <Avatar>
          <svg width="16" height="16" viewBox="0 0 16 16" fill="none" stroke="#fff" strokeWidth="1.200">
            <path d="M4 5c0-6 8-6 8 0 0 3-2 5-4 5S4 8 4 5zM5 10c-2 .5-4 2-4 5h14c0-3-2-4.500-4-5"/>
          </svg>
        </Avatar>
        Admin
        <Caret/>
      </UserMenu>
      <Dots aria-label="More"><span/><span/><span/></Dots>
    </Toolbar>

    <Body>
      <Sidebar>
        {navItems.map(([name, icon], i) => (
          <NavItem key={name} href="#" $active={i === 0}><LineIcon>{icon}</LineIcon>{name}</NavItem>
        ))}
        <PoweredBy>Powered By:<br/>eZee Technosys Pvt. Ltd.<br/>Version : 7.0.260.4</PoweredBy>
      </Sidebar>
      <Main>
        <StatusRow>
          <RoomView>Room View</RoomView>
          <Counters>
            <Counter color="#a000a0">
              Due Out
              <div>
                <svg width="26" height="26" viewBox="0 0 26 26" fill="#a000a0">
                  <path d="M2 1h18v6c-5-4-12-3-18 0zM2 10c4 2 8-3 12-3l1 4-4 11H2z"/>
                  <path d="M18 8l8 17H10z" stroke="#fff"/>
                  <path d="M18 14v5M18 21v2" stroke="#fff" strokeWidth="2"/>
                </svg>
                7
              </div>
            </Counter>
            <Counter color="#dc143c">
              Dirty
              <div>
                <svg width="26" height="26" viewBox="0 0 26 26" fill="#dc143c">
                  <path d="M24 1l-3 12c1 5-3 10-8 12l-6-1 2-2-4-1 3-2-3-4 5 0-2-3c3 2 5 2 7-1l3 1 3-11z"/>
                  <circle cx="6" cy="4" r="2"/><circle cx="11" cy="7" r="3"/><circle cx="5" cy="9" r="1.500"/>
                </svg>
                7
              </div>
            </Counter>
            <Counter color="#444">
              <svg width="12" height="9" viewBox="0 0 12 9" fill="none" stroke="#444" strokeWidth="2"><path d="M1 5l3 3 7-7"/></svg> All
              <div>
                <svg width="26" height="26" viewBox="0 0 26 26">
                  <path d="M2 0h22v26H2z" fill="#444"/>
                  <path d="M4 5h18M4 10h18M4 15h18M4 20h18" stroke="#fff" strokeWidth="3" strokeDasharray="5 1.500"/>
                  <path d="M11 20h4v6h-4z" fill="#fff"/>
                </svg>
                46
              </div>
            </Counter>
          </Counters>
        </StatusRow>
        <FloorName>Ground</FloorName>
        <BoardArea>
          <Board>
            {tiles.map(t => (
              <RoomTile key={t.no} $col={t.col} $row={t.row} $fill={t.fill} $bar={t.bar} $small={t.small}>
                <strong>{t.no}</strong>
                {t.name}
                {t.guest && <TileNote><Coin/>{t.guest}</TileNote>}
                {t.dirty && <TileNote><Bucket/></TileNote>}
              </RoomTile>
            ))}
          </Board>
          <ScrollTrack $vertical><Tip $to="top" $from="bottom"/><ScrollThumb $vertical/><Tip $to="bottom" $from="top"/></ScrollTrack>
          <ScrollTrack><Tip $to="left" $from="right"/><ScrollThumb/><Tip $to="right" $from="left"/></ScrollTrack>
        </BoardArea>
        <StatusBar>
          <StatusCell><span>Working Date:</span>Tuesday, April 02, 2019</StatusCell>
          <StatusCell><span>Audited Date:</span>Thursday, February 28, 2019</StatusCell>
          <StatusCell $last><span>Shift Date:</span>Sunday, May 19, 2019 08:41:31 AM</StatusCell>
          <Support href="#">
            <LineIcon size={17}>
              <path d="M4 13V9C4 0 19 0 19 9v4M4 9c-4 0-4 7 0 7zM19 9c4 0 4 7 0 7zM7 10c3 0 6-1 8-3 1 5 0 9-3.500 10C8 17 6 14 7 10zM19 16c0 4-3 6-7 6"/>
            </LineIcon>
            Live Support
          </Support>
        </StatusBar>
      </Main>
    </Body>

    <SideFlap width="25" height="66" viewBox="0 0 25 66">
      <path d="M.5.500H26V66L.5 41z" fill="#f0f0f0" stroke="#999"/>
      <path d="M20 10L13 10 7 19l6 10h7l-6-10z" fill="#3d92c4"/>
      <path d="M5 29.500h17" stroke="#bbb"/>
    </SideFlap>

    <WalkIn/>
    <GuestMessage/>
  </Shell>
)

export default App
